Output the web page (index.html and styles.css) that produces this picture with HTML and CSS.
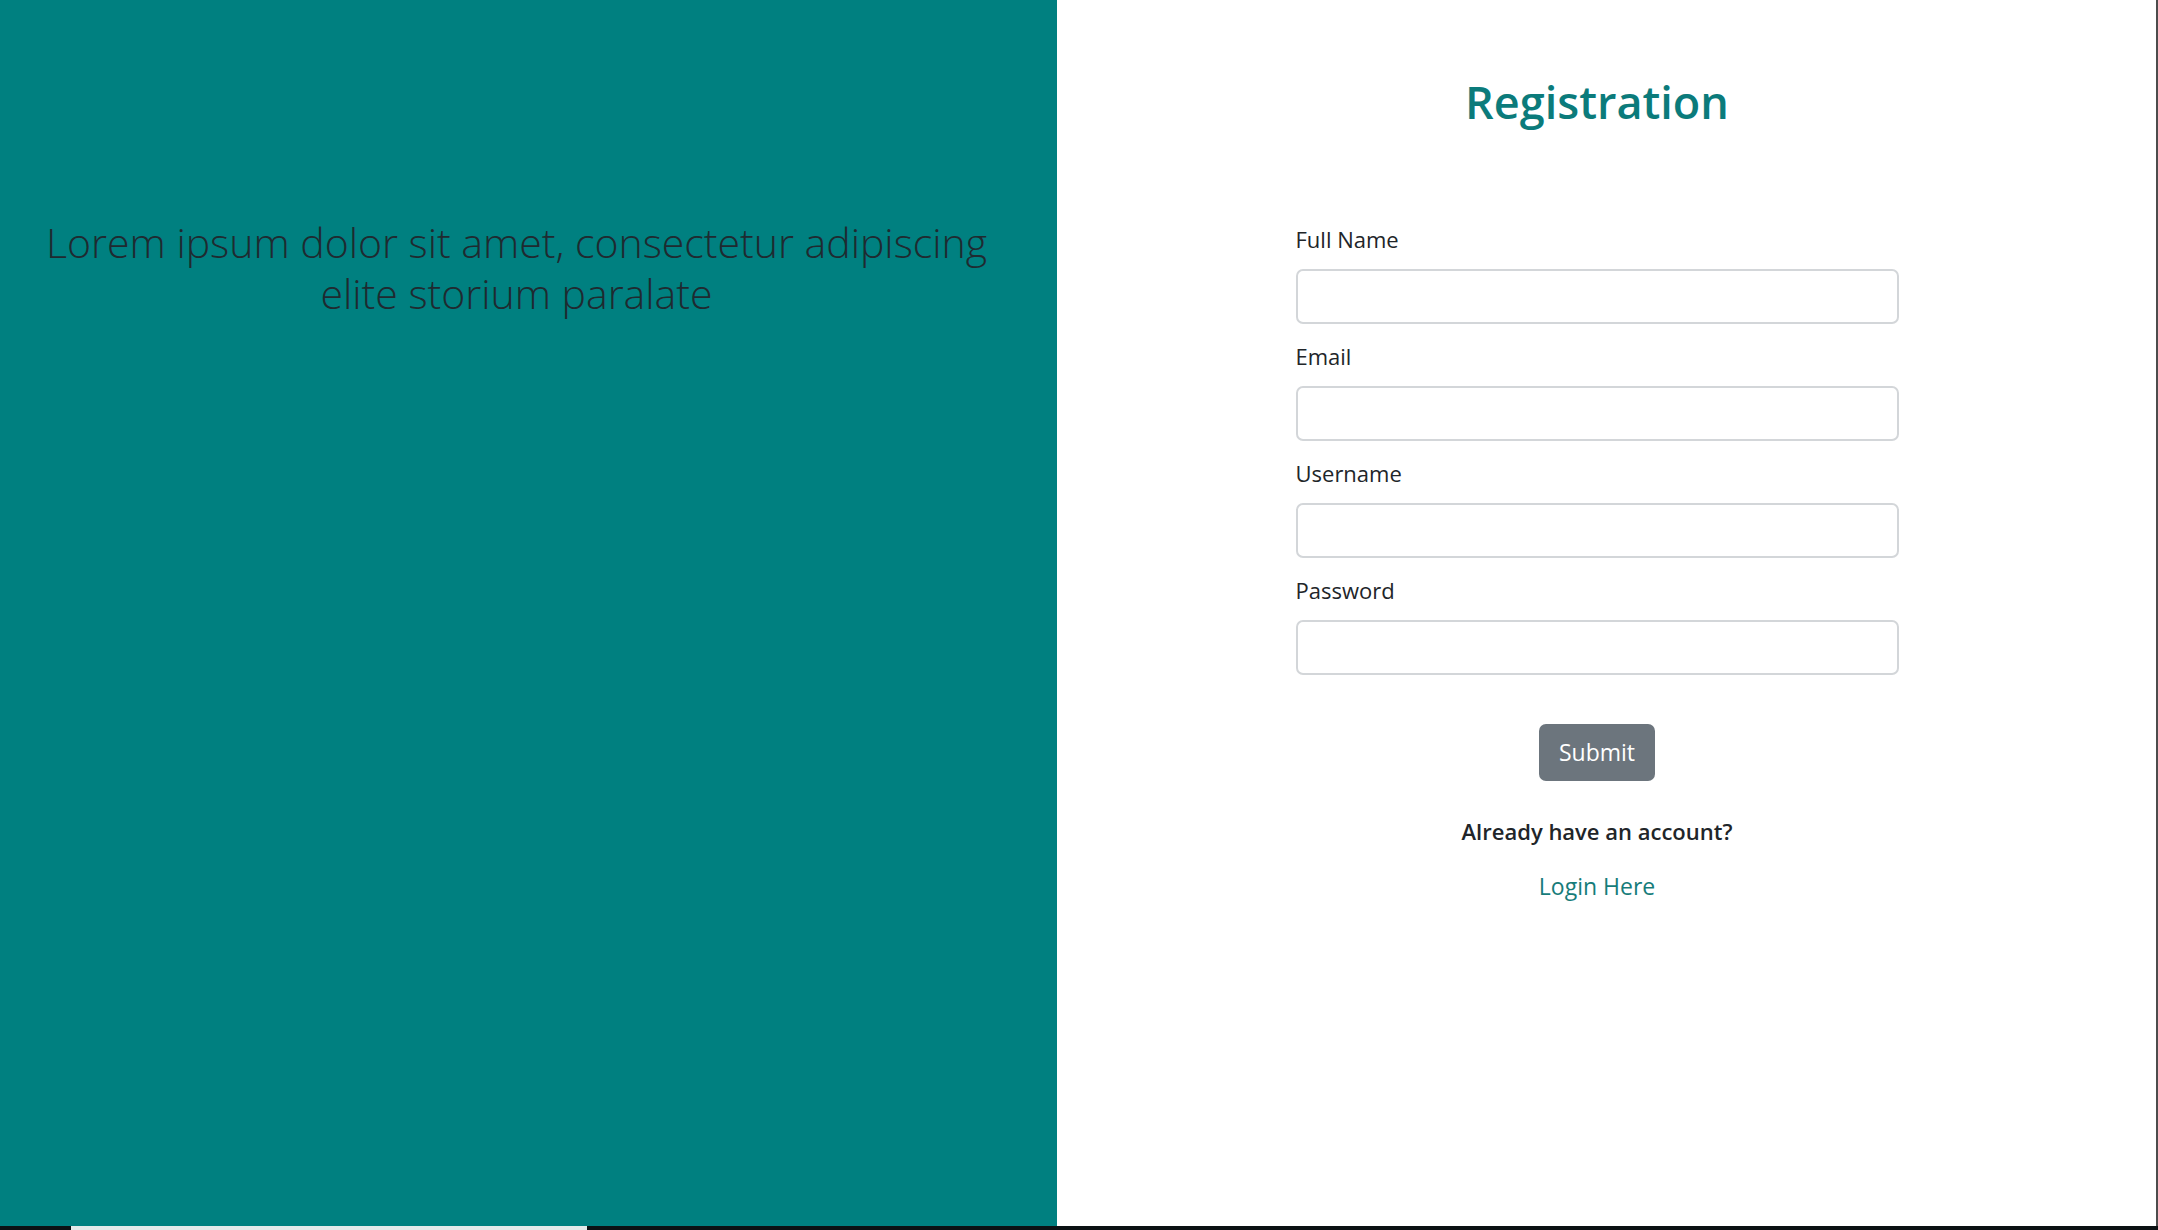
FILE: index.html
```html
<!DOCTYPE html>
<html lang="en">
<head>
<meta charset="utf-8">
<title>Registration</title>
<link rel="stylesheet" href="styles.css">
</head>
<body>
<div class="screen">
  <div class="page">
    <section class="left">
      <p class="tagline">Lorem ipsum dolor sit amet, consectetur adipiscing elite storium paralate</p>
    </section>
    <section class="right">
      <h1 class="title">Registration</h1>
      <form class="form">
        <div class="group">
          <label class="label" for="fullname">Full Name</label>
          <input class="input" id="fullname" type="text">
        </div>
        <div class="group">
          <label class="label" for="email">Email</label>
          <input class="input" id="email" type="email">
        </div>
        <div class="group">
          <label class="label" for="username">Username</label>
          <input class="input" id="username" type="text">
        </div>
        <div class="group">
          <label class="label" for="password">Password</label>
          <input class="input" id="password" type="password">
        </div>
        <div class="actions">
          <button class="btn" type="button">Submit</button>
        </div>
        <p class="already">Already have an account?</p>
        <a class="login" href="#">Login Here</a>
      </form>
    </section>
    <div class="edge"></div>
  </div>
  <div class="taskbar"><span class="taskbar-light"></span></div>
</div>
</body>
</html>
```

FILE: styles.css
```css
* { box-sizing: border-box; }
html, body { margin: 0; padding: 0; }
body {
  width: 2158px;
  height: 1230px;
  overflow: hidden;
  background: #ffffff;
  font-family: "Open Sans", "Noto Sans", sans-serif;
  color: #212529;
}
.screen { display: flex; flex-direction: column; height: 1230px; }
.page { display: flex; height: 1226px; }
.left {
  width: 1057px;
  background: #008080;
  padding: 217px 48px 0 24px;
}
.tagline {
  margin: 0;
  text-align: center;
  font-size: 41px;
  font-weight: 300;
  line-height: 51px;
  color: #1f2a30;
}
.right {
  flex: 1;
  display: flex;
  flex-direction: column;
  align-items: center;
  padding: 0 19px 0 0;
}
.title {
  margin: 72px 0 0;
  font-size: 45px;
  font-weight: 600;
  line-height: 60px;
  color: #0b7b7b;
}
.form {
  width: 603px;
  margin-top: 91px;
  display: flex;
  flex-direction: column;
}
.group { margin-bottom: 16px; }
.label {
  display: block;
  font-size: 22px;
  line-height: 33px;
  margin-bottom: 13px;
  color: #212529;
}
.input {
  display: block;
  width: 100%;
  height: 55px;
  border: 2px solid #d3d6d9;
  border-radius: 7px;
  background: #fff;
  font-family: inherit;
  font-size: 22px;
  padding: 0 16px;
}
.actions { display: flex; justify-content: center; margin-top: 33px; }
.btn {
  width: 116px;
  height: 57px;
  border: 0;
  border-radius: 7px;
  background: #6c757d;
  color: #ffffff;
  font-family: inherit;
  font-size: 23px;
  line-height: 1;
  padding: 0;
}
.already {
  margin: 34px 0 0;
  text-align: center;
  font-size: 22px;
  line-height: 33px;
  font-weight: 600;
  color: #212529;
}
.login {
  margin-top: 22px;
  align-self: center;
  font-size: 23px;
  line-height: 33px;
  color: #167c7a;
  text-decoration: none;
}
.edge { width: 2px; background: #4c4c4c; }
.taskbar {
  height: 4px;
  background: #0b1113;
  position: relative;
}
.taskbar-light {
  position: absolute;
  left: 71px;
  top: 0;
  width: 516px;
  height: 4px;
  background: #e3eaea;
}
```
